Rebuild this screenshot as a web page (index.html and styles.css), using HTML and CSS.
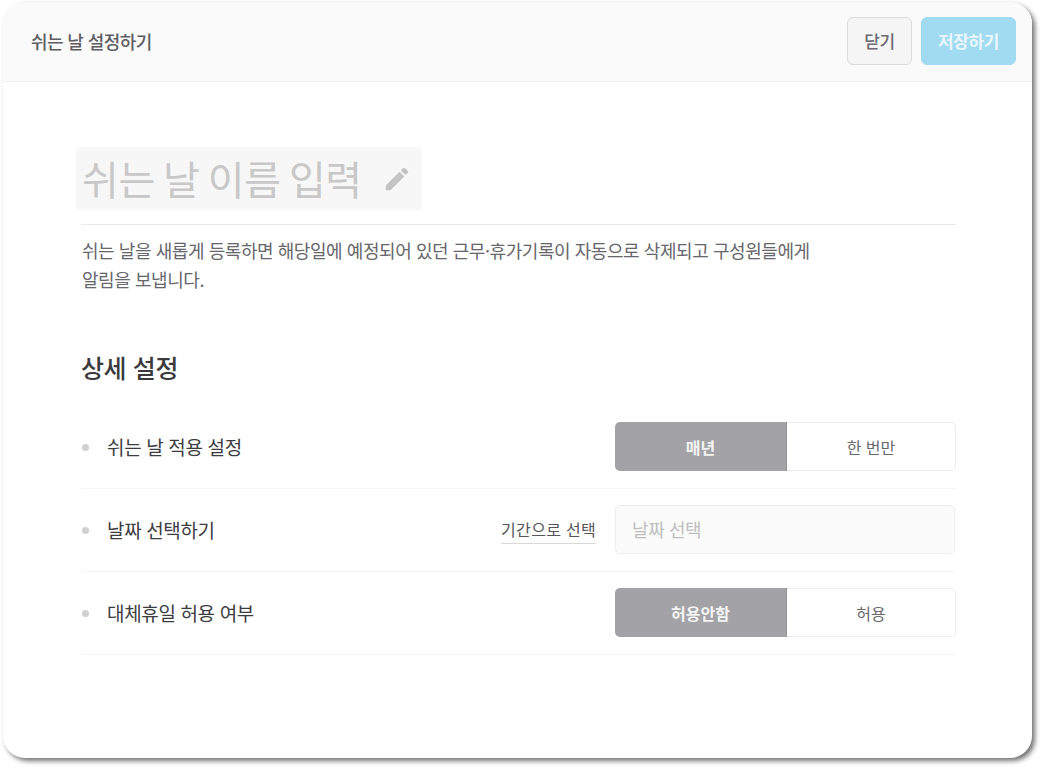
FILE: index.html
```html
<!DOCTYPE html>
<html lang="ko">
<head>
<meta charset="utf-8">
<title>쉬는 날 설정하기</title>
<link rel="stylesheet" href="styles.css">
</head>
<body>
<main class="panel">
  <header class="topbar">
    <h1 class="topbar-title">쉬는 날 설정하기</h1>
    <div class="topbar-actions">
      <button class="btn btn-close" type="button">닫기</button>
      <button class="btn btn-save" type="button">저장하기</button>
    </div>
  </header>
  <section class="content">
    <div class="name-row">
      <div class="name-field">
        <span class="name-text">쉬는 날 이름 입력</span>
        <svg class="pencil" viewBox="0 0 24 24" width="30" height="30" aria-hidden="true"><path d="M3 17.25V21h3.75L17.81 9.94l-3.75-3.75L3 17.25zM20.71 7.04a1 1 0 0 0 0-1.41l-2.34-2.34a1 1 0 0 0-1.41 0l-1.83 1.83 3.75 3.75 1.83-1.83z"/></svg>
      </div>
    </div>
    <p class="desc">쉬는 날을 새롭게 등록하면 해당일에 예정되어 있던 근무·휴가기록이 자동으로 삭제되고 구성원들에게<br>알림을 보냅니다.</p>
    <h2 class="section-title">상세 설정</h2>
    <div class="rows">
      <div class="row">
        <span class="dot"></span>
        <span class="row-label">쉬는 날 적용 설정</span>
        <div class="toggle">
          <span class="toggle-item is-on">매년</span>
          <span class="toggle-item">한 번만</span>
        </div>
      </div>
      <div class="row">
        <span class="dot"></span>
        <span class="row-label">날짜 선택하기</span>
        <a class="range-link">기간으로 선택</a>
        <div class="date-input">날짜 선택</div>
      </div>
      <div class="row">
        <span class="dot"></span>
        <span class="row-label">대체휴일 허용 여부</span>
        <div class="toggle">
          <span class="toggle-item is-on">허용안함</span>
          <span class="toggle-item">허용</span>
        </div>
      </div>
    </div>
  </section>
</main>
</body>
</html>
```
FILE: styles.css
```css
* { box-sizing: border-box; }
html, body { height: 100%; }
body {
  margin: 0;
  padding: 2px 13px 13px 3px;
  background: #fff;
  font-family: "Noto Sans CJK KR", "Noto Sans", sans-serif;
  color: #333;
  overflow: hidden;
}
.panel {
  height: 756px;
  border-radius: 22px;
  background: #fff;
  box-shadow: 3px 3px 5px rgba(0, 0, 0, .55);
  overflow: hidden;
}
.topbar {
  height: 80px;
  display: flex;
  align-items: center;
  justify-content: space-between;
  padding: 0 16px 2px 28px;
  background: #fafafa;
  border-bottom: 1px solid #f1f1f1;
}
.topbar-title {
  margin: 0;
  font-size: 18px;
  letter-spacing: -.6px;
  font-weight: 500;
  color: #5d5d62;
}
.topbar-actions { display: flex; gap: 9px; }
.btn {
  height: 48px;
  border-radius: 6px;
  font-family: inherit;
  font-size: 17px;
  letter-spacing: -.4px;
  font-weight: 500;
  padding: 0;
}
.btn-close {
  width: 65px;
  background: #f5f5f5;
  border: 1px solid #dcdcdc;
  color: #6a6a70;
}
.btn-save {
  width: 95px;
  background: #a1dbf1;
  border: 1px solid #a1dbf1;
  color: #e9f7fc;
  font-weight: 700;
}
.content { padding: 65px 76px 0 78px; }
.name-row {
  height: 78px;
  border-bottom: 1px solid #e8e8e8;
}
.name-field {
  display: inline-flex;
  align-items: center;
  height: 63px;
  width: 346px;
  margin-left: -5px;
  padding-left: 6px;
  background: #f7f7f7;
  border-radius: 4px;
}
.name-text {
  font-size: 40px;
  letter-spacing: -.4px;
  word-spacing: -2.5px;
  line-height: 63px;
  color: #c8c8c8;
  white-space: nowrap;
}
.pencil { margin-left: 20px; fill: #c4c4c4; }
.desc {
  margin: 11px 0 0 1px;
  font-size: 18px;
  letter-spacing: -.44px;
  line-height: 29px;
  color: #66666b;
}
.section-title {
  margin: 55px 0 0;
  font-size: 25px;
  letter-spacing: -.4px;
  line-height: 36px;
  font-weight: 500;
  color: #3a3a3d;
}
.rows { margin-top: 21px; }
.row {
  display: flex;
  align-items: center;
  height: 83px;
  border-bottom: 1px solid #f5f5f5;
}
.dot {
  width: 7px;
  height: 7px;
  border-radius: 50%;
  background: #d0d0d0;
  margin: 0 18px 0 1px;
}
.row-label {
  flex: 1;
  font-size: 19px;
  letter-spacing: -.35px;
  padding-bottom: 2px;
  color: #3c3c40;
}
.toggle {
  display: flex;
  width: 341px;
  height: 49px;
  margin-top: -1px;
}
.toggle-item {
  flex: 1;
  display: flex;
  align-items: center;
  justify-content: center;
  font-size: 16px;
  color: #68686d;
  background: #fff;
  border: 1px solid #ededed;
  border-left: 0;
  border-radius: 0 5px 5px 0;
}
.toggle-item.is-on {
  flex: 0 0 172px;
  background: #a3a3a7;
  color: #f4f4f4;
  font-weight: 700;
  border: 0;
  border-right: 1px solid #939397;
  border-radius: 5px 0 0 5px;
}
.range-link {
  font-size: 16px;
  letter-spacing: .3px;
  line-height: 24px;
  padding-bottom: 2px;
  color: #55555a;
  border-bottom: 1px solid #d8d8d8;
  margin-right: 19px;
}
.date-input {
  width: 340px;
  height: 49px;
  margin: -2px 1px 0 0;
  display: flex;
  align-items: center;
  padding-left: 16px;
  font-size: 18px;
  letter-spacing: -.4px;
  color: #bdbdbd;
  background: #fbfbfb;
  border: 1px solid #ededed;
  border-radius: 5px;
}
```
